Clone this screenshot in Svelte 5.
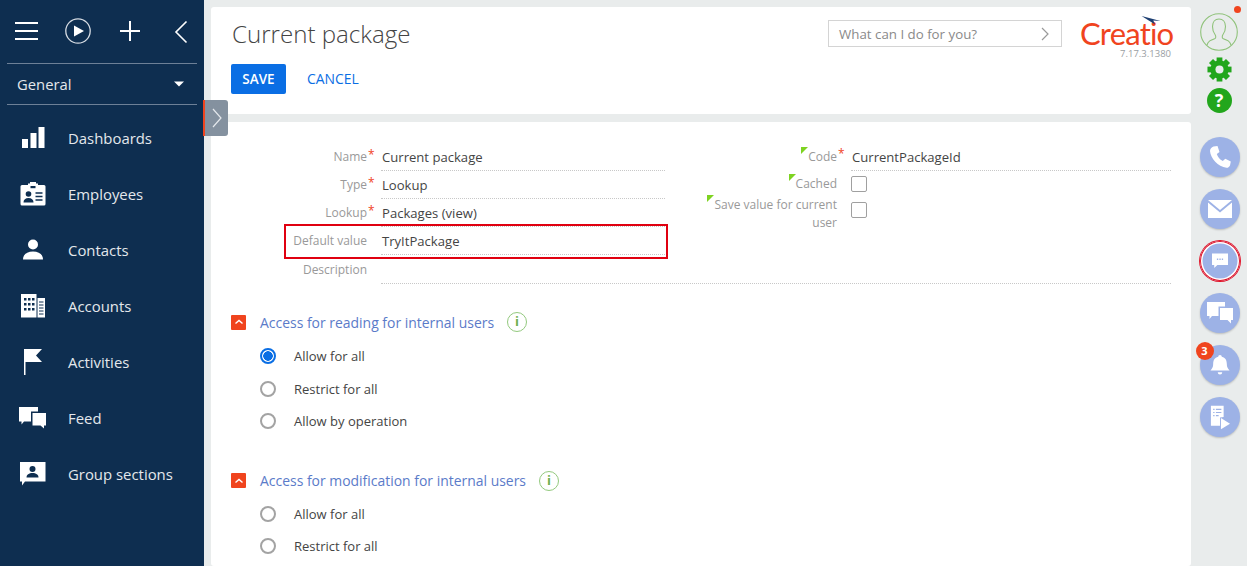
<script>
  const menu = [
    { name: 'Dashboards', icon: 'bars' },
    { name: 'Employees', icon: 'badge' },
    { name: 'Contacts', icon: 'person' },
    { name: 'Accounts', icon: 'building' },
    { name: 'Activities', icon: 'flag' },
    { name: 'Feed', icon: 'chat' },
    { name: 'Group sections', icon: 'group' }
  ]
  const reading = [
    { label: 'Allow for all', on: true },
    { label: 'Restrict for all', on: false },
    { label: 'Allow by operation', on: false }
  ]
  const modify = [
    { label: 'Allow for all', on: false },
    { label: 'Restrict for all', on: false }
  ]
  const teeth = [0, 45, 90, 135]
</script>

{#snippet radios(items)}
  <div class="radios">
    {#each items as r}
      <div class="radio-row">
        <span class="radio" class:on={r.on}></span>
        <span>{r.label}</span>
      </div>
    {/each}
  </div>
{/snippet}

{#snippet secHead(title)}
  <div class="sec-head">
    <span class="collapse">
      <svg viewBox="0 0 16 16" width="16" height="16"><path d="M4.500 9.500 8 6.500l3.500 3" fill="none" stroke="#fff" stroke-width="1.500"/></svg>
    </span>
    <span class="sec-title">{title}</span>
    <span class="info">i</span>
  </div>
{/snippet}

<div class="page">
  <aside class="side">
    <div class="tools">
      <svg class="t-burger" viewBox="0 0 24 20" width="24" height="20"><path d="M0 2h23M0 10h23M0 18h23" stroke="#fff" stroke-width="2"/></svg>
      <svg class="t-play" viewBox="0 0 26 26" width="26" height="26"><circle cx="13" cy="13" r="12.200" fill="none" stroke="#d5dbe2" stroke-width="1.300"/><path d="M9 7.500 19 13 9 18.500z" fill="#fff"/></svg>
      <svg class="t-plus" viewBox="0 0 20 20" width="20" height="20"><path d="M10 0v20M0 10h20" stroke="#fff" stroke-width="2"/></svg>
      <svg class="t-back" viewBox="0 0 14 24" width="14" height="24"><path d="M12.500 1.500 2 12l10.500 10.500" fill="none" stroke="#fff" stroke-width="1.600"/></svg>
    </div>
    <div class="workplace">
      <span>General</span>
      <svg viewBox="0 0 12 6" width="10" height="6"><path d="M0 0h12L6 6z" fill="#fff"/></svg>
    </div>
    <nav>
      {#each menu as m}
        <div class="item">
          <span class="ico">
            {#if m.icon === 'bars'}
              <svg viewBox="0 0 24 24" width="24" height="24"><path d="M1 13h6v9H1zM9.500 7h6v15h-6zM17.500 1h6v21h-6z" fill="#fff"/></svg>
            {:else if m.icon === 'badge'}
              <svg viewBox="0 0 28 24" width="28" height="24"><path d="M1.500 4.500a1.500 1.500 0 0 1 1.500-1.500h6V1.500h2V0h6v1.500h2V3h6a1.500 1.500 0 0 1 1.500 1.500V22a1.500 1.500 0 0 1-1.500 1.500H3A1.500 1.500 0 0 1 1.500 22z" fill="#fff"/><rect x="11.500" y="4" width="5" height="2.200" fill="#0e2e50"/><circle cx="9.500" cy="12" r="2.800" fill="#0e2e50"/><path d="M4.500 20.500c0-3 2-4.500 5-4.500s5 1.500 5 4.500z" fill="#0e2e50"/><path d="M16.500 11h7M16.500 14.500h7M16.500 18h7" stroke="#0e2e50" stroke-width="1.500"/></svg>
            {:else if m.icon === 'person'}
              <svg viewBox="0 0 20 22" width="20" height="22"><circle cx="10" cy="5.500" r="5"/><path d="M0 20.500c0-5 4-8 10-8s10 3 10 8z"/></svg>
            {:else if m.icon === 'building'}
              <svg viewBox="0 0 24 24" width="24" height="24"><path d="M0 0h15.500v23.500H0z" fill="#fff"/><path d="M16.500 4H24v19.500h-7.500z" fill="#fff"/><path d="M3 4h2.500v2.500H3zM7 4h2.500v2.500H7zM11 4h2.500v2.500H11zM3 9h2.500v2.500H3zM7 9h2.500v2.500H7zM11 9h2.500v2.500H11zM3 14h2.500v2.500H3zM7 14h2.500v2.500H7zM11 14h2.500v2.500H11z" fill="#0e2e50"/><path d="M18 8h4.500M18 11h4.500M18 14h4.500M18 17h4.500M18 20h4.500" stroke="#0e2e50" stroke-width="1"/></svg>
            {:else if m.icon === 'flag'}
              <svg viewBox="0 0 20 28" width="20" height="28"><path d="M1 1h18l-6 6.500 6 6.500H2.500v13H1z" fill="#fff"/></svg>
            {:else if m.icon === 'chat'}
              <svg viewBox="0 0 28 22" width="28" height="22"><path d="M0 0h19v4.500h-7v10H5l-2.500 3v-3H0z" fill="#fff"/><path d="M13.500 6H27v12.500h-2v3l-3.500-3h-8z" fill="#fff"/></svg>
            {:else}
              <svg viewBox="0 0 28 24" width="28" height="24"><path d="M1 0h25.500v19.500H6L3 23.500v-4H1z" fill="#fff"/><circle cx="13.500" cy="7" r="3" fill="#0e2e50"/><path d="M7.500 15.500c0-3 2.500-4.500 6-4.500s6 1.500 6 4.500z" fill="#0e2e50"/></svg>
            {/if}
          </span>
          <span class="item-name">{m.name}</span>
        </div>
      {/each}
    </nav>
    <div class="handle">
      <svg viewBox="0 0 10 20" width="10" height="20"><path d="M1 1l8 9-8 9" fill="none" stroke="#e4e8ec" stroke-width="1.200"/></svg>
    </div>
  </aside>

  <main class="main">
    <header class="card head">
      <div class="head-left">
        <h1>Current package</h1>
        <div class="actions">
          <button class="save">SAVE</button>
          <button class="cancel">CANCEL</button>
        </div>
      </div>
      <div class="search">
        <span>What can I do for you?</span>
        <svg viewBox="0 0 8 14" width="8" height="14"><path d="M1 1l6 6-6 6" fill="none" stroke="#9a9a9a" stroke-width="1.200"/></svg>
      </div>
      <div class="logo">
        <div class="logo-word">
          Creatio
          <svg class="swoosh" viewBox="0 0 22 10" width="21" height="9"><path d="M0 0 21 5.500 13 5l2 4.500z" fill="#1d3f72"/></svg>
        </div>
        <div class="version">7.17.3.1380</div>
      </div>
    </header>

    <section class="card body">
      <div class="form">
        <div class="col">
          <div class="row">
            <span class="lbl req">Name</span><span class="val">Current package</span>
          </div>
          <div class="row">
            <span class="lbl req">Type</span><span class="val">Lookup</span>
          </div>
          <div class="row">
            <span class="lbl req">Lookup</span><span class="val">Packages (view)</span>
          </div>
          <div class="row boxed">
            <span class="lbl">Default value</span><span class="val">TryItPackage</span>
          </div>
        </div>
        <div class="col">
          <div class="row">
            <span class="lbl req"><i class="tick"></i>Code</span><span class="val">CurrentPackageId</span>
          </div>
          <div class="row check">
            <span class="lbl"><i class="tick"></i>Cached</span><span class="box"></span>
          </div>
          <div class="row check tall">
            <span class="lbl"><i class="tick"></i>Save value for current user</span><span class="box"></span>
          </div>
        </div>
      </div>
      <div class="row desc">
        <span class="lbl">Description</span><span class="val"></span>
      </div>

      <div class="sec first">
        {@render secHead('Access for reading for internal users')}
        {@render radios(reading)}
      </div>
      <div class="sec second">
        {@render secHead('Access for modification for internal users')}
        {@render radios(modify)}
      </div>
    </section>
  </main>

  <aside class="rail">
    <div class="avatar">
      <svg viewBox="0 0 38 38" width="38" height="38"><circle cx="19" cy="19" r="18.300" fill="none" stroke="#8fc27a" stroke-width="1.100"/><path d="M7 32c1-4 4-5 8-6.500 1-.5 1-2.500 0-4-1.500-2-2.500-4.500-2.500-8C12.500 9 15 6 19 6s6.500 3 6.500 7.500c0 3.500-1 6-2.500 8-1 1.500-1 3.500 0 4 4 1.500 7 2.500 8 6.500" fill="none" stroke="#8fc27a" stroke-width="1.100"/></svg>
      <span class="dot"></span>
    </div>
    <svg class="gear" viewBox="0 0 26 26" width="25" height="25">
      <circle cx="13" cy="13" r="9.500" fill="#22a61c"/>
      {#each teeth as t}
        <rect x="10" y="0.500" width="6" height="25" fill="#22a61c" transform="rotate({t} 13 13)"/>
      {/each}
      <circle cx="13" cy="13" r="4.200" fill="#e9ecec"/>
    </svg>
    <span class="help">?</span>

    <div class="comms">
      <span class="fab">
        <svg viewBox="0 0 24 24" width="24" height="24"><path d="M5.500 1.500 9.500 1l2 6-2.700 2c.8 2.800 3 5.500 6 7l2.500-2.300 5.500 2.800-.8 4c-.5 1.300-2 2.500-3.500 2.300C10 21.500 2.500 13.500 2 6c0-2 1.500-4 3.500-4.500z" fill="#fff"/></svg>
      </span>
      <span class="fab">
        <svg viewBox="0 0 24 18" width="24" height="18"><path d="M0 0h24L12 10z" fill="#fff"/><path d="M0 2.500 12 12.500 24 2.500V18H0z" fill="#fff"/></svg>
      </span>
      <span class="fab ringed">
        <svg viewBox="0 0 18 17" width="16" height="16"><path d="M0 0h18v13H6l-3.500 3.500V13H0z" fill="#fff"/><path d="M5.500 6.500h1.500M8.300 6.500h1.500M11 6.500h1.500" stroke="#9db2e6" stroke-width="1.500"/></svg>
      </span>
      <span class="fab">
        <svg viewBox="0 0 26 22" width="26" height="22"><path d="M0 0h18v4.500h-6.500v9.500H5l-2.500 3v-3H0z" fill="#fff"/><path d="M13 6h13v12h-2v3.500L20.500 18H13z" fill="#fff"/></svg>
      </span>
      <span class="fab">
        <svg viewBox="0 0 22 24" width="20" height="24"><path d="M11 1a2 2 0 0 1 2 2c4 1 5.500 4 5.500 8 0 3 1 5 3 7H.500c2-2 3-4 3-7 0-4 1.500-7 5.500-8a2 2 0 0 1 2-2z" fill="#fff"/><path d="M8.500 20h5a2.500 2.500 0 0 1-5 0z" fill="#fff"/></svg>
        <span class="count">3</span>
      </span>
      <span class="fab">
        <svg viewBox="0 0 22 26" width="20" height="25"><path d="M1 0h14v12.500l-4 .5v9H1z" fill="#fff"/><path d="M3.500 4h1.500M6.500 4h6M3.500 7.500h1.500M6.500 7.500h6M3.500 11h1.500M6.500 11h3" stroke="#9db2e6" stroke-width="1.300"/><path d="M12 13.500 22 20l-10 6z" fill="#fff"/></svg>
      </span>
    </div>
  </aside>
</div>

<style>
  :global(body) { margin: 0; background: #e9ecec; }
  * { box-sizing: border-box; }
  .page {
    display: flex;
    height: 566px;
    overflow: hidden;
    font-family: "Open Sans", sans-serif;
    font-size: 13px;
    color: #444;
    background: #e9ecec;
  }

  /* left panel */
  .side { position: relative; width: 204px; flex: none; background: #0e2e50; color: #e4e8ec; z-index: 2; }
  .tools { position: relative; height: 64px; margin: 0 7px; border-bottom: 1px solid #6d8097; }
  .tools svg { position: absolute; }
  .t-burger { left: 8px; top: 21px; }
  .t-play { left: 58px; top: 18px; }
  .t-plus { left: 113px; top: 21px; }
  .t-back { left: 167px; top: 20px; }
  .workplace {
    height: 41px;
    margin: 0 7px;
    padding: 0 13px 0 10px;
    display: flex;
    align-items: center;
    justify-content: space-between;
    border-bottom: 1px solid #6d8097;
    font-size: 14.800px;
  }
  nav { padding-top: 5px; }
  .item { height: 56px; display: flex; align-items: center; }
  .ico { width: 68px; padding-right: 2px; display: flex; justify-content: center; fill: #fff; }
  .item-name { font-size: 14.900px; }
  .handle {
    position: absolute;
    left: 203px;
    top: 100px;
    width: 25px;
    height: 36px;
    background: #84919f;
    border-left: 2px solid #f0441e;
    border-radius: 0 3px 3px 0;
    display: flex;
    align-items: center;
    justify-content: center;
  }

  /* center */
  .main { width: 987px; flex: none; padding: 7px 0 0 7px; display: flex; flex-direction: column; gap: 8px; }
  .card { background: #fff; border-radius: 3px; }
  .head { height: 107px; flex: none; display: flex; padding: 0 20px; position: relative; }
  .head-left { flex: 1; }
  h1 { margin: 9px 0 0 1px; font-size: 24.100px; font-weight: 300; line-height: 36px; color: #444; }
  .actions { display: flex; margin-top: 12px; align-items: flex-start; }
  button { font-family: inherit; border: 0; cursor: pointer; height: 30px; padding: 0; }
  .save { width: 55px; background: #0a6ee4; color: #fff; font-size: 13.500px; font-weight: 600; border-radius: 2px; }
  .cancel { background: none; color: #0a6ee4; font-size: 13.900px; margin-left: 21px; height: 28px; }
  .search {
    width: 234px;
    height: 27px;
    margin-top: 13px;
    margin-right: 18px;
    border: 1px solid #d4d4d4;
    display: flex;
    align-items: center;
    justify-content: space-between;
    padding: 0 12px 0 10px;
    font-size: 13.300px;
    color: #8a8a8a;
  }
  .logo { width: 94px; margin-right: -3px; text-align: right; }
  .logo-word {
    position: relative;
    margin-top: 11px;
    padding-right: 1px;
    font-family: Lato, sans-serif;
    font-size: 31px;
    line-height: 30px;
    color: #f0441e;
    letter-spacing: -.8px;
  }
  .swoosh { position: absolute; right: 12px; top: -2px; }
  .version { padding-right: 3px; font-size: 9.500px; line-height: 12px; color: #9a9ea3; }

  .body { flex: 1; padding: 21px 20px 0; }
  .form { display: flex; }
  .col { width: 434px; flex: none; }
  .col + .col { width: 500px; margin-left: 6px; }
  .row { display: flex; align-items: center; height: 28px; position: relative; }
  .lbl { width: 136px; flex: none; text-align: right; color: #999; font-size: 12px; position: relative; top: -1px; }
  .col + .col .lbl { width: 166px; }
  .req::after { content: '*'; color: #f0441e; position: absolute; margin-left: 1px; top: -2px; }
  .val {
    flex: 1;
    margin-left: 14px;
    height: 28px;
    line-height: 29px;
    font-size: 13.100px;
    color: #444;
    border-bottom: 1px dotted #c8c8c8;
    padding-left: 1px;
  }
  .boxed::after {
    content: '';
    position: absolute;
    left: 53px;
    right: -3px;
    top: -3px;
    bottom: -4px;
    border: 2px solid #e00010;
  }
  .tick {
    display: inline-block;
    width: 0;
    height: 0;
    border-style: solid;
    border-width: 7px 7px 0 0;
    border-color: #7ed321 transparent transparent transparent;
    vertical-align: 7px;
  }
  .box { width: 16px; height: 16px; border: 1.500px solid #a0a0a0; border-radius: 2px; margin-left: 14px; flex: none; }
  .check { height: 26px; }
  .tall { align-items: flex-start; height: 40px; line-height: 18px; }
  .col + .col .tall .lbl { padding-left: 30px; top: -2px; }
  .tall .box { margin-top: 5px; }
  .desc { margin-top: 1px; }

  .sec.first { margin-top: 26px; }
  .sec.second { margin-top: 31px; }
  .sec-head { display: flex; align-items: center; height: 24px; }
  .collapse { width: 15px; height: 15px; background: #f0441e; border-radius: 1px; display: flex; align-items: center; justify-content: center; margin-right: 14px; }
  .collapse svg { flex: none; }
  .sec-title { color: #5b7bc9; font-size: 13.950px; }
  .info {
    width: 20px;
    height: 20px;
    margin-left: 13px;
    border: 1.300px solid #93c97e;
    border-radius: 50%;
    color: #6fb04f;
    font-size: 13px;
    font-weight: 700;
    line-height: 17px;
    text-align: center;
  }
  .radios { margin-top: 6px; padding-left: 29px; display: flex; flex-direction: column; }
  .second .radios { margin-top: 5px; }
  .radio-row { display: flex; align-items: center; height: 32.500px; gap: 18px; color: #444; font-size: 13px; }
  .radio { width: 16px; height: 16px; border: 2px solid #a3a3a3; border-radius: 50%; background: #fff; flex: none; }
  .radio.on { border-color: #0a6ee4; background: radial-gradient(circle, #0a6ee4 0 4.500px, #fff 5px); }

  /* right rail */
  .rail { flex: 1; display: flex; flex-direction: column; align-items: center; padding-top: 13px; position: relative; }
  .avatar { position: relative; width: 38px; height: 38px; }
  .dot { position: absolute; right: -3px; top: -7px; width: 7px; height: 7px; background: #f0441e; border-radius: 50%; }
  .gear { margin-top: 6px; flex: none; }
  .help {
    width: 25px;
    height: 25px;
    margin-top: 6px;
    border-radius: 50%;
    background: #22a61c;
    color: #fff;
    font-weight: 700;
    font-size: 18px;
    line-height: 25px;
    text-align: center;
  }
  .comms { margin-top: 24px; margin-left: 1px; display: flex; flex-direction: column; gap: 12px; }
  .fab {
    position: relative;
    width: 40px;
    height: 40px;
    border-radius: 50%;
    background: #9db2e6;
    box-shadow: 0 1px 2px rgba(0,0,0,.2);
    display: flex;
    align-items: center;
    justify-content: center;
  }
  .ringed { box-shadow: 0 0 0 1px #e0162b, inset 0 0 0 1px #e0162b, inset 0 0 0 2.500px #fff; }
  .count {
    position: absolute;
    left: -4px;
    top: -3px;
    width: 18px;
    height: 18px;
    border-radius: 50%;
    background: #f0441e;
    color: #fff;
    font-size: 11px;
    font-weight: 700;
    line-height: 18px;
    text-align: center;
  }
</style>
